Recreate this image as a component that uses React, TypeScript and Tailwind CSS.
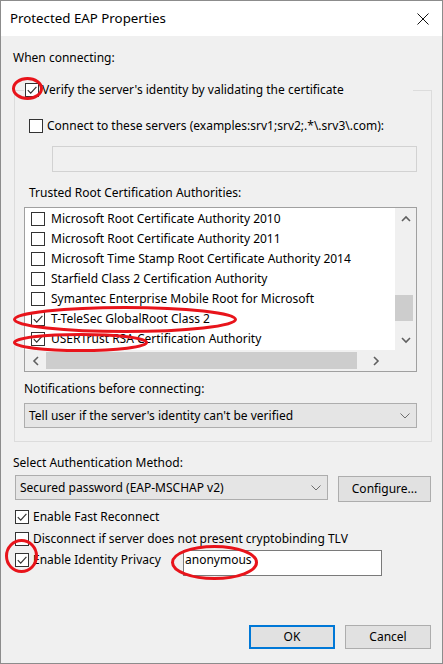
import type { ReactNode } from "react"

const CERTS = [
  { name: "Microsoft Root Certificate Authority 2010", checked: false },
  { name: "Microsoft Root Certificate Authority 2011", checked: false },
  { name: "Microsoft Time Stamp Root Certificate Authority 2014", checked: false },
  { name: "Starfield Class 2 Certification Authority", checked: false },
  { name: "Symantec Enterprise Mobile Root for Microsoft", checked: false },
  { name: "T-TeleSec GlobalRoot Class 2", checked: true },
  { name: "USERTrust RSA Certification Authority", checked: true },
]

function Check({ checked }: { checked?: boolean }) {
  return (
    <span className="flex h-[14px] w-[14px] shrink-0 items-center justify-center border border-[#333333] bg-white">
      {checked && (
        <svg width="12" height="12" viewBox="0 0 12 12">
          <path d="M1.8 6.2l2.9 2.9L10.4 2.8" fill="none" stroke="#333333" strokeWidth="1.2" />
        </svg>
      )}
    </span>
  )
}

function CheckRow({ checked, children }: { checked?: boolean; children: ReactNode }) {
  return (
    <div className="flex h-[16px] items-center gap-[4px]">
      <Check checked={checked} />
      <span className="whitespace-nowrap">{children}</span>
    </div>
  )
}

function Chevron({ dir, color = "#606060" }: { dir: "up" | "down" | "left" | "right"; color?: string }) {
  const d = {
    up: "M1 6l4-4 4 4",
    down: "M1 2l4 4 4-4",
    left: "M6 1L2 5l4 4",
    right: "M2 1l4 4-4 4",
  }[dir]
  const side = dir === "left" || dir === "right"
  return (
    <svg width={side ? 8 : 10} height={side ? 10 : 8} viewBox={side ? "0 0 8 10" : "0 0 10 8"}>
      <path d={d} fill="none" stroke={color} strokeWidth="1.6" />
    </svg>
  )
}

function Combo({ text, width }: { text: string; width: string }) {
  return (
    <div className={`flex h-[25px] items-center justify-between border border-[#adadad] bg-[#e5e5e5] pl-[4px] pr-[6px] ${width}`}>
      <span className="whitespace-nowrap">{text}</span>
      <svg width="10" height="6" viewBox="0 0 10 6">
        <path d="M0.5 0.5l4.5 4.5 4.5-4.5" fill="none" stroke="#6d6d6d" strokeWidth="1" />
      </svg>
    </div>
  )
}

export default function App() {
  return (
    <div className="relative h-[664px] w-[443px] font-['Segoe_UI','Noto_Sans',sans-serif] text-[12px] text-black">
      <div className="flex h-[664px] w-[443px] flex-col border border-[#8c8c8c] bg-[#f0f0f0]">
        {/* Title bar */}
        <div className="flex h-[35px] shrink-0 items-center justify-between bg-white pl-[9px] pr-[13px]">
          <span className="pt-[1px] text-[13.3px]">Protected EAP Properties</span>
          <svg width="12" height="12" viewBox="0 0 12 12">
            <path d="M0.5 0.5l11 11M11.5 0.5l-11 11" stroke="#111" strokeWidth="1" />
          </svg>
        </div>

        <div className="mt-[14px] h-[16px] pl-[12px] leading-[16px]">When connecting:</div>

        {/* Group */}
        <fieldset className="ml-[13px] mt-[16px] w-[418px] border border-[#dcdcdc] pb-[13px] pl-[9px] pr-[14px]">
          <legend className="w-[389px] pl-[1px]">
            <div className="flex h-[16px] items-center gap-[3px]">
              <Check checked />
              <span className="whitespace-nowrap">Verify the server's identity by validating the certificate</span>
            </div>
          </legend>

          <div className="ml-[5px] mt-[20px]">
            <CheckRow>Connect to these servers (examples:srv1;srv2;.*\.srv3\.com):</CheckRow>
          </div>
          <div className="ml-[28px] mt-[12px] h-[26px] w-[365px] border border-[#d2d2d2] bg-[#f0f0f0]" />

          <div className="ml-[5px] mt-[13px] h-[16px] leading-[16px]">Trusted Root Certification Authorities:</div>

          {/* List */}
          <div className="mt-[6px] flex h-[165px] w-[393px] flex-col border border-[#a0a0a0] bg-white">
            <div className="flex h-[142px]">
              <div className="flex-1 overflow-hidden pt-[1px]">
                {CERTS.map((c) => (
                  <div key={c.name} className="flex h-[20px] items-center gap-[6px] pl-[6px]">
                    <Check checked={c.checked} />
                    <span className="whitespace-nowrap">{c.name}</span>
                  </div>
                ))}
              </div>
              <div className="flex w-[21px] flex-col items-center bg-[#f0f0f0]">
                <div className="flex h-[21px] w-full items-center justify-center">
                  <Chevron dir="up" />
                </div>
                <div className="flex-1" />
                <div className="h-[26px] w-[18px] self-start bg-[#cdcdcd]" />
                <div className="h-[8px]" />
                <div className="flex h-[21px] w-full items-center justify-center">
                  <Chevron dir="down" />
                </div>
              </div>
            </div>
            <div className="flex h-[21px]">
              <div className="flex flex-1 items-center bg-[#f0f0f0]">
                <div className="flex w-[21px] justify-center">
                  <Chevron dir="left" />
                </div>
                <div className="h-[17px] w-[311px] bg-[#cdcdcd]" />
                <div className="flex flex-1 justify-center">
                  <Chevron dir="right" />
                </div>
              </div>
              <div className="w-[21px] bg-[#f0f0f0]" />
            </div>
          </div>

          <div className="mt-[9px] h-[16px] leading-[16px]">Notifications before connecting:</div>
          <div className="mt-[6px]">
            <Combo text="Tell user if the server's identity can't be verified" width="w-[393px]" />
          </div>
        </fieldset>

        <div className="mt-[13px] h-[16px] pl-[12px] leading-[16px]">Select Authentication Method:</div>
        <div className="mt-[4px] flex items-start pl-[14px]">
          <Combo text="Secured password (EAP-MSCHAP v2)" width="w-[313px]" />
          <button className="ml-[10px] mt-[1px] h-[26px] w-[93px] border border-[#adadad] bg-[#e1e1e1]">
            Configure...
          </button>
        </div>

        <div className="mt-[7px] pl-[14px]">
          <CheckRow checked>Enable Fast Reconnect</CheckRow>
        </div>
        <div className="mt-[6px] pl-[14px]">
          <CheckRow>Disconnect if server does not present cryptobinding TLV</CheckRow>
        </div>
        <div className="mt-[3px] flex h-[26px] items-start pl-[14px]">
          <div className="mt-[2px] w-[168px]">
            <CheckRow checked>Enable Identity Privacy</CheckRow>
          </div>
          <div className="h-[26px] w-[199px] border border-[#7a7a7a] bg-white pl-[1px] leading-[18px]">
            anonymous
          </div>
        </div>

        <div className="mt-auto flex justify-end gap-[10px] pb-[14px] pr-[11px]">
          <button className="h-[24px] w-[86px] border-2 border-[#0078d7] bg-[#e1e1e1]">OK</button>
          <button className="h-[24px] w-[86px] border border-[#adadad] bg-[#e1e1e1]">Cancel</button>
        </div>
      </div>

      {/* red annotation marks */}
      <svg className="pointer-events-none absolute left-0 top-0" width="443" height="664" viewBox="0 0 443 664">
        <g fill="none" stroke="#e8141b" strokeWidth="3">
          <ellipse cx="27.5" cy="88.5" rx="14" ry="10" />
          <ellipse cx="125" cy="319.5" rx="110.5" ry="12" />
          <ellipse cx="80.5" cy="342.5" rx="66" ry="8" />
          <ellipse cx="21.5" cy="556" rx="15" ry="15.5" />
          <ellipse cx="214.5" cy="562.5" rx="42" ry="16" />
        </g>
      </svg>
    </div>
  )
}
